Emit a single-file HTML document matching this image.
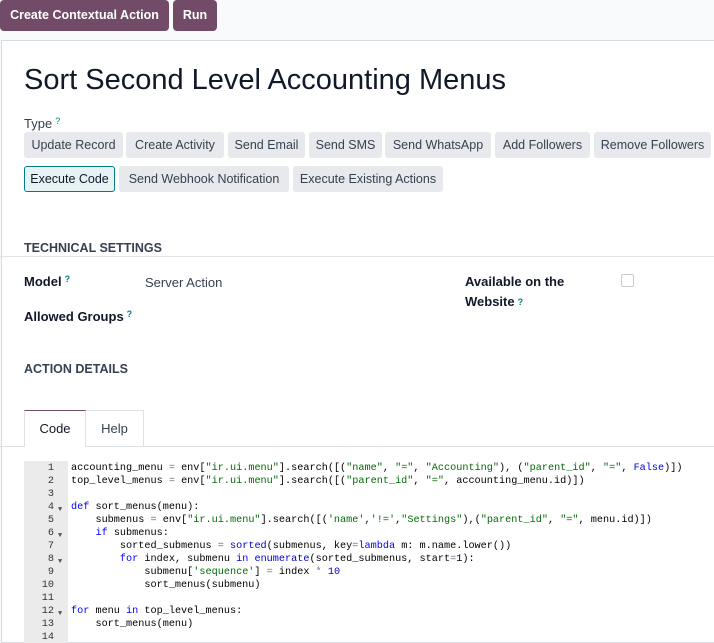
<!DOCTYPE html>
<html><head><meta charset="utf-8"><style>
*{box-sizing:border-box;margin:0;padding:0}
body{width:714px;height:643px;overflow:hidden;background:#f9fafb;font-family:"Liberation Sans",sans-serif;color:#111827;position:relative;font-size:13px}
.a{position:absolute;white-space:nowrap}
.tb{position:absolute;top:0;height:31px;background:#714b67;color:#fff;border-radius:4px;font-weight:bold;font-size:12.5px;line-height:31px;text-align:center;white-space:nowrap}
.card{position:absolute;left:1px;top:40px;width:713px;height:603px;background:#fff;border:1px solid #d8dadd;border-right:none}
.btn{position:absolute;height:26px;background:#e7e9ed;border-radius:3px;font-size:12.5px;line-height:26px;text-align:center;color:#374151;white-space:nowrap}
.q{color:#017e84;font-size:9px;vertical-align:top;margin-left:3px}
.h{position:absolute;left:24px;font-weight:bold;font-size:12.5px;color:#374151}
.lbl{position:absolute;font-weight:bold;font-size:13px;white-space:nowrap}
.code{position:absolute;left:24px;top:461px;width:690px;height:182px;font-family:"Liberation Mono",monospace;font-size:10.2px;line-height:13.1px;overflow:hidden}
.gut{position:absolute;left:0;top:0;width:44px;height:190px;background:#ebebeb}
.ln{position:absolute;left:0;width:30px;text-align:right;color:#333}
.cl{position:absolute;left:47px;white-space:pre;color:#000}
.k{color:#0000ff}.s{color:#036a07}.n{color:#0000cd}.o{color:#687687}
.ar{position:absolute;left:34px;font-size:7px;color:#555}
</style></head><body>
<div class="tb" style="left:0;width:169px">Create Contextual Action</div>
<div class="tb" style="left:173px;width:44px">Run</div>
<div class="card"></div>
<div class="a" style="left:24px;top:64px;font-size:29px;color:#111827">Sort Second Level Accounting Menus</div>
<div class="a" style="left:24px;top:116px;font-size:13px;color:#374151">Type<span class="q">?</span></div>
<div class="btn" style="left:24px;top:132px;width:99px">Update Record</div>
<div class="btn" style="left:126px;top:132px;width:98px">Create Activity</div>
<div class="btn" style="left:228px;top:132px;width:77px">Send Email</div>
<div class="btn" style="left:309px;top:132px;width:73px">Send SMS</div>
<div class="btn" style="left:385px;top:132px;width:106px">Send WhatsApp</div>
<div class="btn" style="left:495px;top:132px;width:95px">Add Followers</div>
<div class="btn" style="left:594px;top:132px;width:117px">Remove Followers</div>
<div class="btn" style="left:24px;top:166px;width:91px;background:#e6f2f3;border:1px solid #017e84;line-height:24px;color:#111827">Execute Code</div>
<div class="btn" style="left:119px;top:166px;width:170px">Send Webhook Notification</div>
<div class="btn" style="left:293px;top:166px;width:150px">Execute Existing Actions</div>
<div class="h" style="top:241px">TECHNICAL SETTINGS</div>
<div class="a" style="left:0;top:256px;width:714px;height:1px;background:#e0e2e6"></div>
<div class="lbl" style="left:24px;top:274px">Model<span class="q">?</span></div>
<div class="a" style="left:145px;top:275px;color:#374151">Server Action</div>
<div class="lbl" style="left:24px;top:309px">Allowed Groups<span class="q">?</span></div>
<div class="lbl" style="left:465px;top:272px;line-height:20px">Available on the<br>Website<span class="q">?</span></div>
<div class="a" style="left:621px;top:274px;width:13px;height:13px;border:1px solid #ccc;border-radius:2px"></div>
<div class="h" style="top:362px">ACTION DETAILS</div>
<div class="a" style="left:0;top:446px;width:714px;height:1px;background:#dee2e6"></div>
<div class="a" style="left:24px;top:410px;width:62px;height:37px;background:#fff;border:1px solid #dee2e6;border-top:1px solid #714b67;border-bottom:none;text-align:center;line-height:36px;font-size:13px">Code</div>
<div class="a" style="left:86px;top:410px;width:58px;height:37px;border:1px solid #dee2e6;border-left:none;text-align:center;line-height:36px;font-size:13px;color:#374151">Help</div>
<div class="code">
<div class="gut"></div>
<div class="ln" style="top:1px">1</div><div class="ln" style="top:14px">2</div><div class="ln" style="top:27px">3</div><div class="ln" style="top:40px">4</div><div class="ln" style="top:53px">5</div><div class="ln" style="top:66px">6</div><div class="ln" style="top:79px">7</div><div class="ln" style="top:92px">8</div><div class="ln" style="top:105px">9</div><div class="ln" style="top:118px">10</div><div class="ln" style="top:131px">11</div><div class="ln" style="top:144px">12</div><div class="ln" style="top:157px">13</div><div class="ln" style="top:170px">14</div>
<div class="ar" style="top:43px">▼</div><div class="ar" style="top:69px">▼</div><div class="ar" style="top:95px">▼</div><div class="ar" style="top:147px">▼</div>
<div class="cl" style="top:1px">accounting_menu <span class="o">=</span> env[<span class="s">"ir.ui.menu"</span>].search([(<span class="s">"name"</span>, <span class="s">"="</span>, <span class="s">"Accounting"</span>), (<span class="s">"parent_id"</span>, <span class="s">"="</span>, <span class="n">False</span>)])</div>
<div class="cl" style="top:14px">top_level_menus <span class="o">=</span> env[<span class="s">"ir.ui.menu"</span>].search([(<span class="s">"parent_id"</span>, <span class="s">"="</span>, accounting_menu.id)])</div>
<div class="cl" style="top:40px"><span class="k">def</span> sort_menus(menu):</div>
<div class="cl" style="top:53px">    submenus <span class="o">=</span> env[<span class="s">"ir.ui.menu"</span>].search([(<span class="s">'name'</span>,<span class="s">'!='</span>,<span class="s">"Settings"</span>),(<span class="s">"parent_id"</span>, <span class="s">"="</span>, menu.id)])</div>
<div class="cl" style="top:66px">    <span class="k">if</span> submenus:</div>
<div class="cl" style="top:79px">        sorted_submenus <span class="o">=</span> <span class="n">sorted</span>(submenus, key<span class="o">=</span><span class="k">lambda</span> m: m.name.lower())</div>
<div class="cl" style="top:92px">        <span class="k">for</span> index, submenu <span class="k">in</span> <span class="n">enumerate</span>(sorted_submenus, start<span class="o">=</span>1):</div>
<div class="cl" style="top:105px">            submenu[<span class="s">'sequence'</span>] <span class="o">=</span> index <span class="o">*</span> <span class="n">10</span></div>
<div class="cl" style="top:118px">            sort_menus(submenu)</div>
<div class="cl" style="top:144px"><span class="k">for</span> menu <span class="k">in</span> top_level_menus:</div>
<div class="cl" style="top:157px">    sort_menus(menu)</div>
</div>
</body></html>
